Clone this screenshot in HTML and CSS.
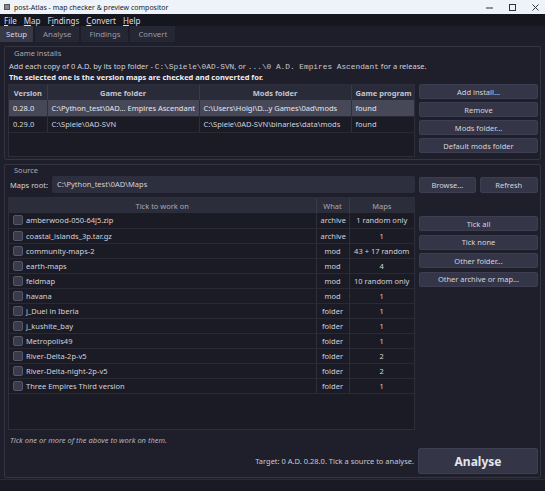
FILE: index.html
```html
<!DOCTYPE html>
<html lang="en">
<head>
    <meta charset="UTF-8">
    <title>post-Atlas - map checker &amp; preview compositor</title>
    <link rel="stylesheet" href="styles.css">
</head>
<body>
<div class="window">
    <div class="titlebar">
        <span class="app-icon"></span>
        <span class="title">post-Atlas - map checker &amp; preview compositor</span>
        <span class="win-ctrl">
            <svg width="9" height="9" viewBox="0 0 9 9"><path d="M1 5h7" stroke="#333" stroke-width="1"/></svg>
            <svg width="9" height="9" viewBox="0 0 9 9"><rect x="1.5" y="1.5" width="6" height="6" fill="none" stroke="#333" stroke-width="1"/></svg>
            <svg width="9" height="9" viewBox="0 0 9 9"><path d="M1.5 1.5l6 6M7.5 1.5l-6 6" stroke="#333" stroke-width="1"/></svg>
        </span>
    </div>

    <nav class="menubar">
        <span><u>F</u>ile</span>
        <span><u>M</u>ap</span>
        <span>F<u>i</u>ndings</span>
        <span><u>C</u>onvert</span>
        <span><u>H</u>elp</span>
    </nav>

    <div class="tabs">
        <span class="tab active">Setup</span>
        <span class="tab">Analyse</span>
        <span class="tab">Findings</span>
        <span class="tab">Convert</span>
    </div>

    <main class="page">
        <!-- installs of the game -->
        <section class="group installs">
            <div class="group-title">Game installs</div>
            <p class="note first">Add each copy of 0 A.D. by its top folder - <code>C:\Spiele\0AD-SVN</code>, or <code>...\0 A.D. Empires Ascendant</code> for a release.</p>
            <p class="note strong">The selected one is the version maps are checked and converted for.</p>
            <div class="split">
                <div class="table-box installs-box">
                    <table class="grid">
                        <colgroup><col style="width:38px"><col style="width:152px"><col style="width:152px"><col></colgroup>
                        <thead>
                            <tr><th>Version</th><th>Game folder</th><th>Mods folder</th><th>Game program</th></tr>
                        </thead>
                        <tbody>
                            <tr class="selected"><td>0.28.0</td><td>C:\Python_test\0AD... Empires Ascendant</td><td>C:\Users\Holgi\D...y Games\0ad\mods</td><td>found</td></tr>
                            <tr><td>0.29.0</td><td>C:\Spiele\0AD-SVN</td><td>C:\Spiele\0AD-SVN\binaries\data\mods</td><td>found</td></tr>
                        </tbody>
                    </table>
                </div>
                <div class="btn-col">
                    <button class="btn">Add install...</button>
                    <button class="btn">Remove</button>
                    <button class="btn">Mods folder...</button>
                    <button class="btn">Default mods folder</button>
                </div>
            </div>
        </section>

        <!-- where the maps come from -->
        <section class="group source">
            <div class="group-title">Source</div>
            <div class="root-row">
                <label>Maps root:</label>
                <div class="field">C:\Python_test\0AD\Maps</div>
                <button class="btn">Browse...</button>
                <button class="btn">Refresh</button>
            </div>
            <div class="split grow">
                <div class="table-box list-box">
                    <table class="grid list">
                        <colgroup><col><col style="width:33px"><col style="width:65px"></colgroup>
                        <thead>
                            <tr><th>Tick to work on</th><th>What</th><th>Maps</th></tr>
                        </thead>
                        <tbody id="sources"></tbody>
                    </table>
                </div>
                <div class="btn-col list-btns">
                    <button class="btn">Tick all</button>
                    <button class="btn">Tick none</button>
                    <button class="btn">Other folder...</button>
                    <button class="btn">Other archive or map...</button>
                </div>
            </div>
            <p class="hint">Tick one or more of the above to work on them.</p>
            <div class="run-row">
                <span class="target">Target: 0 A.D. 0.28.0. Tick a source to analyse.</span>
                <button class="btn big">Analyse</button>
            </div>
        </section>
    </main>
    <div class="statusbar"></div>
</div>

<script>
    const sources = [
        ["amberwood-050-64j5.zip", "archive", "1 random only"],
        ["coastal_islands_3p.tar.gz", "archive", "1"],
        ["community-maps-2", "mod", "43 + 17 random"],
        ["earth-maps", "mod", "4"],
        ["feldmap", "mod", "10 random only"],
        ["havana", "mod", "1"],
        ["j_Duel in Iberia", "folder", "1"],
        ["j_kushite_bay", "folder", "1"],
        ["Metropolis49", "folder", "1"],
        ["River-Delta-2p-v5", "folder", "2"],
        ["River-Delta-night-2p-v5", "folder", "2"],
        ["Three Empires Third version", "folder", "1"]
    ];
    const body = document.getElementById("sources");
    sources.forEach(function (s) {
        const tr = document.createElement("tr");
        tr.innerHTML = '<td><span class="check"></span>' + s[0] + '</td><td class="c">' + s[1] + '</td><td class="c">' + s[2] + '</td>';
        body.appendChild(tr);
    });
</script>
</body>
</html>
```

FILE: styles.css
```css
/* dark Qt-like theme */
body, html {
    margin: 0;
    padding: 0;
    font-family: "Noto Sans", "Open Sans", sans-serif;
    font-size: 7.5px;
    background-color: #1f1f2b;
    color: #d2d2da;
}
* { box-sizing: border-box; }
p { margin: 0; }

.window {
    width: 545px;
    height: 491px;
    display: flex;
    flex-direction: column;
    overflow: hidden;
}

.titlebar {
    height: 14px;
    flex: none;
    background-color: #eef2f9;
    color: #222;
    display: flex;
    align-items: center;
    padding-left: 4px;
    font-size: 7px;
}
.app-icon {
    width: 6px;
    height: 6px;
    background-color: #888;
    border: 1px solid #555;
    margin-right: 4px;
}
.title { flex: 1; }
.win-ctrl {
    display: flex;
    gap: 14px;
    padding-right: 5px;
}

.menubar {
    height: 12px;
    flex: none;
    background-color: #16161e;
    display: flex;
    align-items: center;
    gap: 7px;
    padding-left: 4px;
    font-size: 8px;
    color: #dcdce4;
}
.menubar u { text-decoration-thickness: 1px; text-underline-offset: 1px; }

.tabs {
    height: 16px;
    flex: none;
    display: flex;
    gap: 2px;
    background-color: #1e1e2a;
    font-size: 7.8px;
}
.tab {
    display: flex;
    align-items: center;
    padding: 0 8px;
    background-color: #262734;
    color: #9a9aa8;
}
.tab.active {
    background-color: #383947;
    color: #d8d8e2;
    padding: 0 6px;
}

.page {
    flex: 1;
    display: flex;
    flex-direction: column;
    gap: 4px;
    padding: 4px 4px 1px 4px;
}

.group {
    border: 1px solid #343442;
    border-radius: 2px;
    padding: 1px 2px 3px 3px;
}
.group-title {
    color: #a8a8b4;
    padding-left: 6px;
    height: 11px;
    line-height: 11px;
}

.installs { height: 114px; flex: none; }
.installs .note { line-height: 10px; padding-left: 1px; }
.installs .note.first { margin-top: 2px; }
.installs .split { margin-top: 2px; }
.note.strong { font-weight: bold; color: #eeeef4; }
code {
    font-family: "Liberation Mono", monospace;
    font-size: 7.8px;
    color: #c8c8d2;
}

.split {
    display: flex;
    gap: 4px;
    margin-top: 4px;
}
.table-box {
    width: 407px;
    flex: none;
    background-color: #1b1b26;
    border: 1px solid #2d2d3b;
}
.installs-box { height: 73px; }

.grid {
    width: 100%;
    border-collapse: collapse;
    table-layout: fixed;
}
.grid th {
    background-color: #2a2b39;
    color: #c4c4ce;
    font-weight: bold;
    height: 15px;
    padding: 0 4px;
    border-right: 1px solid #3a3a4a;
    text-align: center;
    white-space: nowrap;
}
.grid td {
    height: 16px;
    padding: 0 4px;
    border-right: 1px solid #2e2e3c;
    border-bottom: 1px solid #2a2a37;
    white-space: nowrap;
    overflow: hidden;
}
.grid th:last-child, .grid td:last-child { border-right: none; }
.grid tr.selected td { background-color: #464858; color: #e6e6ee; }

.btn-col {
    flex: 1;
    display: flex;
    flex-direction: column;
    gap: 3px;
}
.btn {
    font-family: inherit;
    font-size: 7.5px;
    color: #d4d4dc;
    background-color: #343547;
    border: 1px solid #3d3e52;
    border-radius: 2px;
    height: 15px;
    padding: 0;
    cursor: pointer;
}

.source {
    flex: 1;
    display: flex;
    flex-direction: column;
}
.source .group-title { height: 10px; line-height: 9px; }
.root-row {
    display: flex;
    align-items: center;
    gap: 4px;
}
.root-row label { width: 40px; padding-left: 2px; white-space: nowrap; }
.field {
    width: 367px;
    height: 17px;
    line-height: 17px;
    background-color: #2e2f3e;
    border-radius: 2px;
    padding-left: 5px;
}
.root-row .btn { width: 57px; height: 16px; }
.root-row .btn:last-child { width: 59px; }

.list-box { height: 233px; }
.list th { height: 15px; font-weight: normal; color: #a8a8b4; background-color: #2c2d3b; }
.list td { height: 15px; }
.list td.c { text-align: center; }
.check {
    display: inline-block;
    width: 10px;
    height: 10px;
    border: 1px solid #555668;
    border-radius: 2px;
    background-color: #393a4a;
    vertical-align: -2px;
    margin-right: 3px;
}
.list-btns { margin-top: 19px; gap: 3.5px; }

.hint {
    font-style: italic;
    color: #b4b4be;
    margin-top: 5px;
    padding-left: 2px;
}
.run-row {
    display: flex;
    align-items: center;
    justify-content: flex-end;
    gap: 4px;
    margin-top: 3px;
}
.target { color: #c8c8d0; }
.btn.big {
    width: 120px;
    height: 26px;
    font-size: 12px;
    font-weight: bold;
    color: #e4e4ec;
}

.statusbar {
    height: 12px;
    flex: none;
    background-color: #1a1a24;
    border-top: 1px solid #2a2a36;
}
```
